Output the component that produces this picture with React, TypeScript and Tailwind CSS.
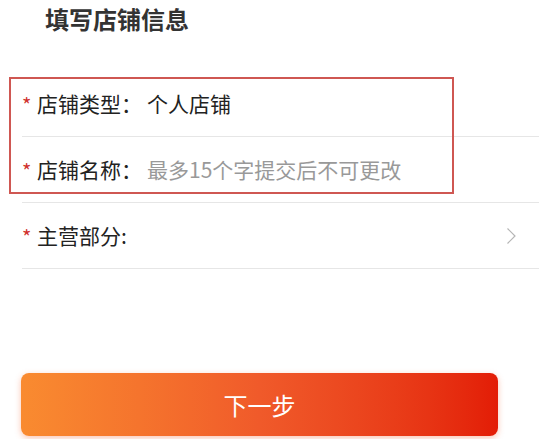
export default function App() {
  const rows = [
    { label: "店铺类型：", value: "个人店铺", placeholder: false, arrow: false },
    { label: "店铺名称：", value: "最多15个字提交后不可更改", placeholder: true, arrow: false },
    { label: "主营部分:", value: "", placeholder: false, arrow: true },
  ];

  return (
    <div
      className="relative w-[539px] h-[439px] bg-white overflow-hidden"
      style={{ fontFamily: '"Noto Sans CJK SC", "Noto Sans", sans-serif' }}
    >
      {/* Title */}
      <div className="h-[71px] pl-[45px] pt-[1px] text-[24px] leading-[36px] font-bold text-[#333]">
        填写店铺信息
      </div>

      {/* Form rows */}
      <div className="ml-[22px]">
        {rows.map((r) => (
          <div
            key={r.label}
            className="h-[66px] flex items-center border-b border-[#e6e6e6] pr-[22px]"
          >
            <span className="w-[15px] text-[#d0312d] text-[20px] leading-none pt-[3px]">*</span>
            <span className="text-[21px] text-[#222]">{r.label}</span>
            {r.value && (
              <span
                className={
                  "ml-[5px] text-[21px] " + (r.placeholder ? "text-[#999]" : "text-[#222]")
                }
              >
                {r.value}
              </span>
            )}
            {r.arrow && (
              <svg className="ml-auto" width="11" height="18" viewBox="0 0 11 18" fill="none">
                <polyline points="1.5,1.5 9,9 1.5,16.5" stroke="#b5b5b5" strokeWidth="1.2" />
              </svg>
            )}
          </div>
        ))}
      </div>

      {/* Next button */}
      <div className="mt-[104px] ml-[21px] mr-[41px] h-[63px] rounded-[8px] bg-gradient-to-r from-[#f98b30] via-[#f05a2a] to-[#e31c06] shadow-[0_2px_6px_rgba(240,90,40,0.35)] flex items-center justify-center text-white text-[24px]">
        下一步
      </div>

      {/* Highlight annotation box */}
      <div className="absolute left-[9px] top-[77px] w-[445px] h-[117px] border-2 border-[#cf5752] pointer-events-none" />
    </div>
  );
}
